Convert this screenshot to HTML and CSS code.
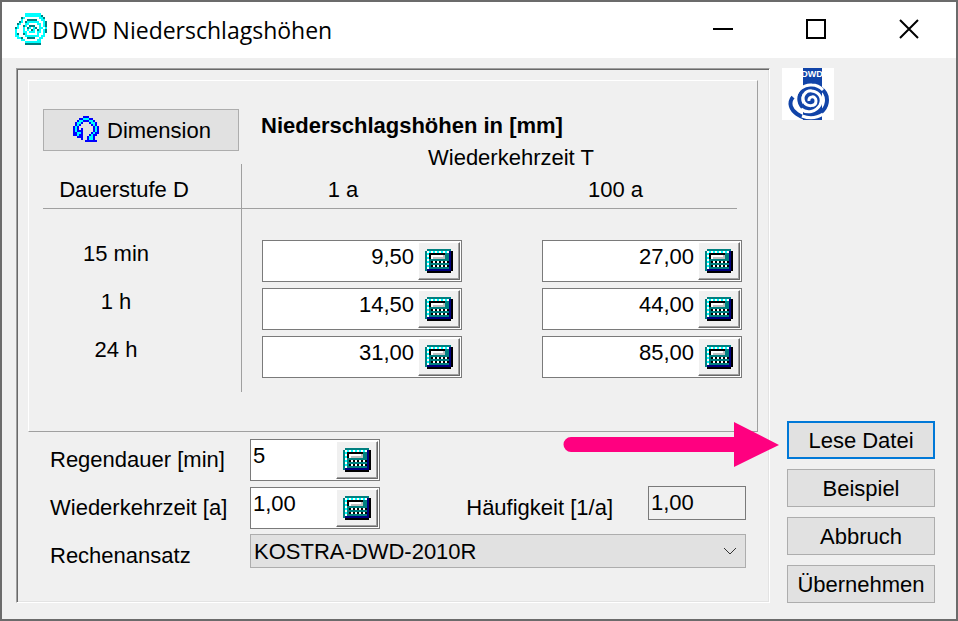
FILE: index.html
```html
<!DOCTYPE html>
<html lang="de">
<head>
  <meta charset="UTF-8">
  <meta name="viewport" content="width=device-width, initial-scale=1.0">
  <title>DWD Niederschlagshöhen</title>
  <link rel="stylesheet" href="styles.css">
</head>
<body>

<!-- shared calculator icon -->
<svg class="defs" aria-hidden="true">
  <symbol id="calc" viewBox="0 0 14 12" shape-rendering="crispEdges">
    <path fill="#000" d="M13 1h1v10h-1zM1 11h12v1H1z"/>
    <path fill="#008080" d="M1 0h12v1H1zM0 1h13v10H0z"/>
    <path fill="#fff" d="M1 1h11v1H1zM1 1h1v9H1z"/>
    <path fill="#0ff" d="M2 1h1v1H2zM4 1h1v1H4zM6 1h1v1H6zM8 1h1v1H8zM10 1h1v1h-1zM1 2h1v1H1zM1 4h1v1H1zM1 6h1v1H1zM1 8h1v1H1z"/>
    <path fill="#000080" d="M12 1h1v10H1v-1h11z"/>
    <path fill="#000" d="M2 2h8v1H3v2H2zM3 6h9v1H3zM3 8h9v1H3z"/>
    <path fill="#fff" d="M3 3h7v2H3z"/>
    <path fill="#c0c0c0" d="M4 4h6v1H4zM9 3h1v1H9z"/>
    <path fill="#fff" d="M4 6h1v1H4zM6 6h1v1H6zM8 6h1v1H8zM10 6h1v1h-1zM4 8h1v1H4zM6 8h1v1H6zM8 8h1v1H8zM10 8h1v1h-1z"/>
  </symbol>
</svg>

<div class="window">
  <header class="titlebar">
    <svg class="app-icon" viewBox="0 0 16 16" shape-rendering="crispEdges">
      <path stroke="#00ffff" d="M5 .5h8M5 1.5h8M4 2.5h1M12 2.5h2M3 3.5h1M13 3.5h2M3 4.5h1M6 4.5h6M14 4.5h1M2 5.5h1M5 5.5h2M11 5.5h2M14 5.5h1M1 6.5h1M5 6.5h1M12 6.5h1M14 6.5h1M1 7.5h1M4 7.5h1M7 7.5h1M9 7.5h1M12 7.5h2M15 7.5h1M0 8.5h1M4 8.5h1M6 8.5h1M9 8.5h1M12 8.5h1M14 8.5h1M0 9.5h1M4 9.5h2M7 9.5h3M11 9.5h2M14 9.5h1M0 10.5h1M5 10.5h1M11 10.5h1M14 10.5h1M0 11.5h2M5 11.5h7M13 11.5h2M1 12.5h2M12 12.5h2M3 13.5h2M11 13.5h2M5 14.5h8"/>
      <path stroke="#008080" d="M13 1.5h1M3 2.5h1M14 2.5h1M6 3.5h5M2 4.5h1M5 4.5h1M15 4.5h1M1 5.5h1M15 5.5h1M4 6.5h1M7 6.5h3M15 6.5h1M0 7.5h1M6 7.5h1M10 7.5h1M8 8.5h1M11 8.5h1M15 8.5h1M15 9.5h1M1 10.5h1M4 10.5h1M3 12.5h1M6 12.5h4M5 15.5h8"/>
    </svg>
    <h1>DWD Niederschlagshöhen</h1>
    <div class="caption-buttons">
      <button type="button" aria-label="Minimieren"><svg viewBox="0 0 20 20"><path d="M0 10h20"/></svg></button>
      <button type="button" aria-label="Maximieren"><svg viewBox="0 0 20 20"><path d="M1 1h18v18H1z"/></svg></button>
      <button type="button" aria-label="Schließen"><svg viewBox="0 0 20 20"><path d="M1 1l18 18M19 1L1 19"/></svg></button>
    </div>
  </header>

  <main class="content">
    <div class="panel">
      <section class="depths">
        <div class="depths-head">
          <button type="button" class="btn dimension">
            <svg viewBox="0 0 13 13" shape-rendering="crispEdges">
              <path stroke="#00f" d="M5 .5h3M3 1.5h7M2 2.5h9M1 3.5h4M8 3.5h4M1 4.5h3M9 4.5h3M0 5.5h3M10 5.5h3M0 6.5h3M4 6.5h1M10 6.5h3M0 7.5h5M10 7.5h3M0 8.5h5M9 8.5h4M0 9.5h5M8 9.5h4M2 10.5h3M7 10.5h4M4 11.5h1M7 11.5h4M6 12.5h6"/>
              <path stroke="#0ff" d="M5 1.5h3M3 2.5h2M8 2.5h2M2 3.5h2M9 3.5h2M2 4.5h1M10 4.5h1M1 5.5h1M11 5.5h1M1 6.5h1M11 6.5h1M1 7.5h1M11 7.5h1M2 8.5h2M10 8.5h1M2 9.5h1M9 9.5h1M8 10.5h2M8 11.5h2"/>
            </svg>
            Dimension
          </button>
          <div class="headings">
            <h2>Niederschlagshöhen in [mm]</h2>
            <p>Wiederkehrzeit T</p>
          </div>
        </div>

        <table class="grid">
          <thead>
            <tr><th class="col-d">Dauerstufe D</th><th class="col-1">1 a</th><th class="col-100">100 a</th></tr>
          </thead>
          <tbody>
            <tr>
              <th>15 min</th>
              <td><div class="field"><input type="text" value="9,50" aria-label="15 min, 1 a"><button type="button" aria-label="Rechner"><svg><use href="#calc"/></svg></button></div></td>
              <td><div class="field"><input type="text" value="27,00" aria-label="15 min, 100 a"><button type="button" aria-label="Rechner"><svg><use href="#calc"/></svg></button></div></td>
            </tr>
            <tr>
              <th>1 h</th>
              <td><div class="field"><input type="text" value="14,50" aria-label="1 h, 1 a"><button type="button" aria-label="Rechner"><svg><use href="#calc"/></svg></button></div></td>
              <td><div class="field"><input type="text" value="44,00" aria-label="1 h, 100 a"><button type="button" aria-label="Rechner"><svg><use href="#calc"/></svg></button></div></td>
            </tr>
            <tr>
              <th>24 h</th>
              <td><div class="field"><input type="text" value="31,00" aria-label="24 h, 1 a"><button type="button" aria-label="Rechner"><svg><use href="#calc"/></svg></button></div></td>
              <td><div class="field"><input type="text" value="85,00" aria-label="24 h, 100 a"><button type="button" aria-label="Rechner"><svg><use href="#calc"/></svg></button></div></td>
            </tr>
          </tbody>
        </table>
      </section>

      <form class="settings">
        <div class="row">
          <label for="dauer">Regendauer [min]</label>
          <div class="field small"><input type="text" id="dauer" value="5"><button type="button" aria-label="Rechner"><svg><use href="#calc"/></svg></button></div>
        </div>
        <div class="row">
          <label for="zeit">Wiederkehrzeit [a]</label>
          <div class="field small"><input type="text" id="zeit" value="1,00"><button type="button" aria-label="Rechner"><svg><use href="#calc"/></svg></button></div>
          <label for="freq" class="freq-label">Häufigkeit [1/a]</label>
          <input type="text" id="freq" class="freq" value="1,00" readonly>
        </div>
        <div class="row">
          <label for="ansatz">Rechenansatz</label>
          <div class="select">
            <select id="ansatz"><option>KOSTRA-DWD-2010R</option></select>
            <svg viewBox="0 0 14 8"><path d="M1 1l6 6 6-6"/></svg>
          </div>
        </div>
      </form>
    </div>

    <aside class="side">
      <svg class="logo" viewBox="0 0 52 52">
        <path fill="#fff" d="M0 0h52v52H0z"/>
        <path fill="#1144a8" d="M21 0h19v52H21z"/>
        <text x="30" y="9" text-anchor="middle" fill="#fff">DWD</text>
        <g fill="none" stroke="#1144a8">
          <path stroke-width="4" d="M38 20C43 23 45 27 45 32C45 40 39 46 32 48"/>
          <path stroke-width="4" d="M22 21C17 25 16 32 19 37C20 39 21 40 23 41"/>
          <path stroke-width="4" d="M11 29C6 35 9 42 15 46C18 48 20 49 23 50"/>
        </g>
        <g fill="none" stroke="#fff" stroke-width="3">
          <path d="M27 33C26 28 34 27 34 33C34 39 25 39 22 34C19 28 24 22 30 23C38 24 41 31 38 37C34 44 25 46 19 41"/>
          <path d="M13 30C15 22 22 16 30 17C35 17 38 19 41 22"/>
          <path d="M20 48C28 51 35 50 41 46"/>
        </g>
      </svg>
      <div class="actions">
        <button type="button" class="btn default">Lese Datei</button>
        <button type="button" class="btn">Beispiel</button>
        <button type="button" class="btn">Abbruch</button>
        <button type="button" class="btn">Übernehmen</button>
        <svg class="arrow" viewBox="0 0 216 46">
          <path fill="#ff0080" d="M8 15h163V0l45 23-45 22V30H8a7 7 0 0 1 0-15z"/>
        </svg>
      </div>
    </aside>
  </main>
</div>

</body>
</html>
```
FILE: styles.css
```css
* { box-sizing: border-box; }
body { margin: 0; color: #000; font: 22px/28px "Liberation Sans", Arial, sans-serif; }
button, input, select { font: inherit; color: inherit; margin: 0; padding: 0; border-radius: 0; }
h1, h2, p { margin: 0; }
.defs { display: none; }

.window { min-height: 100vh; display: flex; flex-direction: column; background: #f0f0f0; border: 2px solid #6b6b6b; }

/* title bar */
.titlebar { display: flex; align-items: center; height: 56px; padding-left: 13px; background: #fff; }
.app-icon { width: 32px; height: 32px; margin: 0 5px 2px 0; }
.titlebar h1 { flex: 1; font: 23px/32px "Open Sans", "Segoe UI", sans-serif; }
.caption-buttons { display: flex; height: 100%; padding: 0 1px 2px 0; }
.caption-buttons button { display: flex; align-items: center; justify-content: center; width: 93px; border: none; background: none; }
.caption-buttons svg { width: 20px; height: 20px; fill: none; stroke: #000; stroke-width: 2; }

.content { flex: 1; display: flex; gap: 12px; padding: 10px 21px 16px 14px; }

/* sunken outer frame */
.panel { flex: 1; padding: 11px; border: 1px solid; border-color: #a0a0a0 #fff #fff #a0a0a0; box-shadow: inset 1px 1px #696969, inset -1px -1px #e3e3e3; }
.depths { padding: 28px 14px 39px; border: 1px solid; border-color: #fff #a0a0a0 #a0a0a0 #fff; }

.depths-head { display: flex; gap: 22px; align-items: flex-start; }
.headings { flex: 1; }
.headings h2 { font-size: 22px; line-height: 34px; }
.headings p { padding-left: 167px; line-height: 30px; }

.btn { height: 38px; padding-top: 2px; border: 1px solid #adadad; background: #e1e1e1; text-align: center; }
.btn.default { border: 2px solid #0078d7; }
.dimension { display: flex; align-items: center; gap: 8px; width: 196px; height: 42px; padding-left: 29px; }
.dimension svg { width: 26px; height: 26px; margin-bottom: 4px; }

.grid { width: 694px; margin-top: -9px; table-layout: fixed; border-spacing: 0; }
.grid th, .grid td { padding: 0 0 6px; font-weight: normal; vertical-align: top; }
.grid thead th { height: 45px; padding: 12px 0 4px; border-bottom: 1px solid #a0a0a0; }
.grid tr th:first-child { padding-right: 52px; border-right: 1px solid #a0a0a0; }
.grid thead tr .col-d { width: 199px; padding-right: 36px; }
.grid .col-1 { width: 280px; padding-right: 78px; }
.grid .col-100 { padding-right: 28px; }
.grid td { padding-left: 20px; }
.grid tbody tr:first-child > * { padding-top: 31px; }
.grid tbody tr:last-child > * { padding-bottom: 14px; }

/* text box with calculator button */
.field { display: flex; width: 200px; height: 42px; padding: 1px; border: 1px solid #7a7a7a; background: #fff; }
.field input { flex: 1; min-width: 0; height: 30px; padding: 0 4px 0 1px; border: none; background: none; text-align: right; outline: none; }
.field button { display: flex; align-items: center; justify-content: center; width: 42px; border: 1px solid; border-color: #fff #696969 #696969 #fff; box-shadow: inset -1px -1px #a0a0a0; background: #f0f0f0; }
.field svg { width: 28px; height: 24px; }
.field.small { width: 130px; }
.field.small input { text-align: left; }

.settings { padding: 4px 12px 9px 22px; }
.row { display: flex; align-items: center; height: 48px; }
.row label:first-child { width: 200px; }
.row .freq-label { margin-left: auto; }
.freq { align-self: flex-start; width: 98px; height: 34px; margin: 2px 0 0 35px; padding-left: 2px; border: 1px solid #7a7a7a; background: #f0f0f0; }
.select { flex: 1; align-self: flex-start; position: relative; margin-top: 2px; }
.select select { display: block; width: 100%; height: 34px; padding: 2px 0 0 3px; appearance: none; border: 1px solid #adadad; background: #e1e1e1; }
.select svg { position: absolute; right: 9px; top: 13px; width: 14px; height: 8px; fill: none; stroke: #333; pointer-events: none; }

.side { display: flex; flex-direction: column; justify-content: space-between; width: 153px; }
.logo { width: 52px; height: 52px; }
.logo text { font: bold 9px "Liberation Sans", Arial, sans-serif; }
.actions { position: relative; display: flex; flex-direction: column; gap: 10px; margin-left: 5px; }
.arrow { position: absolute; right: calc(100% + 8px); top: 1px; width: 216px; height: 46px; pointer-events: none; }
```
